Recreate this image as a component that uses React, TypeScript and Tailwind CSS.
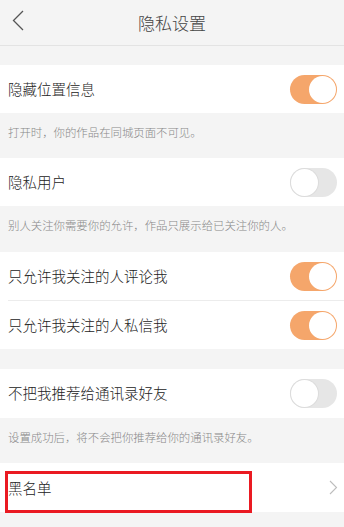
const toggles = {
  hideLocation: true,
  privateUser: false,
  commentFollowed: true,
  messageFollowed: true,
  noRecommend: false,
};

function Toggle({ on }: { on: boolean }) {
  return (
    <span
      className={`flex h-[29px] w-[47px] items-center rounded-full p-[1px] ${
        on ? "justify-end bg-[#f5a66b]" : "justify-start bg-[#e6e6e6]"
      }`}
    >
      <span
        className={`block h-[27px] w-[27px] rounded-full bg-white ${
          on ? "" : "shadow-[0_0_0_1px_#dcdcdc]"
        }`}
      />
    </span>
  );
}

function Row({ label, children }: { label: string; children?: React.ReactNode }) {
  return (
    <div className="flex h-[48px] items-center justify-between bg-white pl-2 pr-[7px]">
      <span className="text-[14.5px] font-light text-[#222]">{label}</span>
      {children}
    </div>
  );
}

function Hint({ text, h }: { text: string; h: string }) {
  return (
    <p className={`${h} pl-2 pt-[11px] text-[11.4px] font-light leading-4 text-[#888]`}>{text}</p>
  );
}

export default function App() {
  return (
    <main className="min-h-[527px] w-[344px] bg-[#f4f4f4] font-['Noto_Sans_CJK_SC',sans-serif]">
      <header className="relative flex h-[46px] items-center justify-center border-b border-[#e3e3e3]">
        <svg
          className="absolute left-[12px] top-[10px]"
          width="12"
          height="21"
          viewBox="0 0 12 21"
          fill="none"
        >
          <path d="M11 1 L1.5 10.5 L11 20" stroke="#555" strokeWidth="1.3" />
        </svg>
        <h1 className="text-[17px] font-light text-[#444]">隐私设置</h1>
      </header>

      <section className="mt-[19px]">
        <Row label="隐藏位置信息">
          <Toggle on={toggles.hideLocation} />
        </Row>
        <Hint h="h-[45px]" text="打开时，你的作品在同城页面不可见。" />
        <Row label="隐私用户">
          <Toggle on={toggles.privateUser} />
        </Row>
        <Hint h="h-[46px]" text="别人关注你需要你的允许，作品只展示给已关注你的人。" />
      </section>

      <section className="bg-white">
        <Row label="只允许我关注的人评论我">
          <Toggle on={toggles.commentFollowed} />
        </Row>
        <div className="ml-2 h-px bg-[#ececec]" />
        <Row label="只允许我关注的人私信我">
          <Toggle on={toggles.messageFollowed} />
        </Row>
      </section>

      <section className="mt-5">
        <div className="h-[49px] bg-white">
          <Row label="不把我推荐给通讯录好友">
            <Toggle on={toggles.noRecommend} />
          </Row>
        </div>
        <Hint h="h-[45px]" text="设置成功后，将不会把你推荐给你的通讯录好友。" />
      </section>

      <section className="relative flex h-[49px] items-center justify-between bg-white pl-2 pr-[6px]">
        <span className="text-[14.5px] font-light text-[#222]">黑名单</span>
        <svg width="9" height="15" viewBox="0 0 9 15" fill="none">
          <path d="M1 1 L7.5 7.5 L1 14" stroke="#bdbdbd" strokeWidth="1.1" />
        </svg>
        <div className="absolute left-[5px] top-[8px] h-[42px] w-[247px] border-[3px] border-[#ea1a22]" />
      </section>
    </main>
  );
}
